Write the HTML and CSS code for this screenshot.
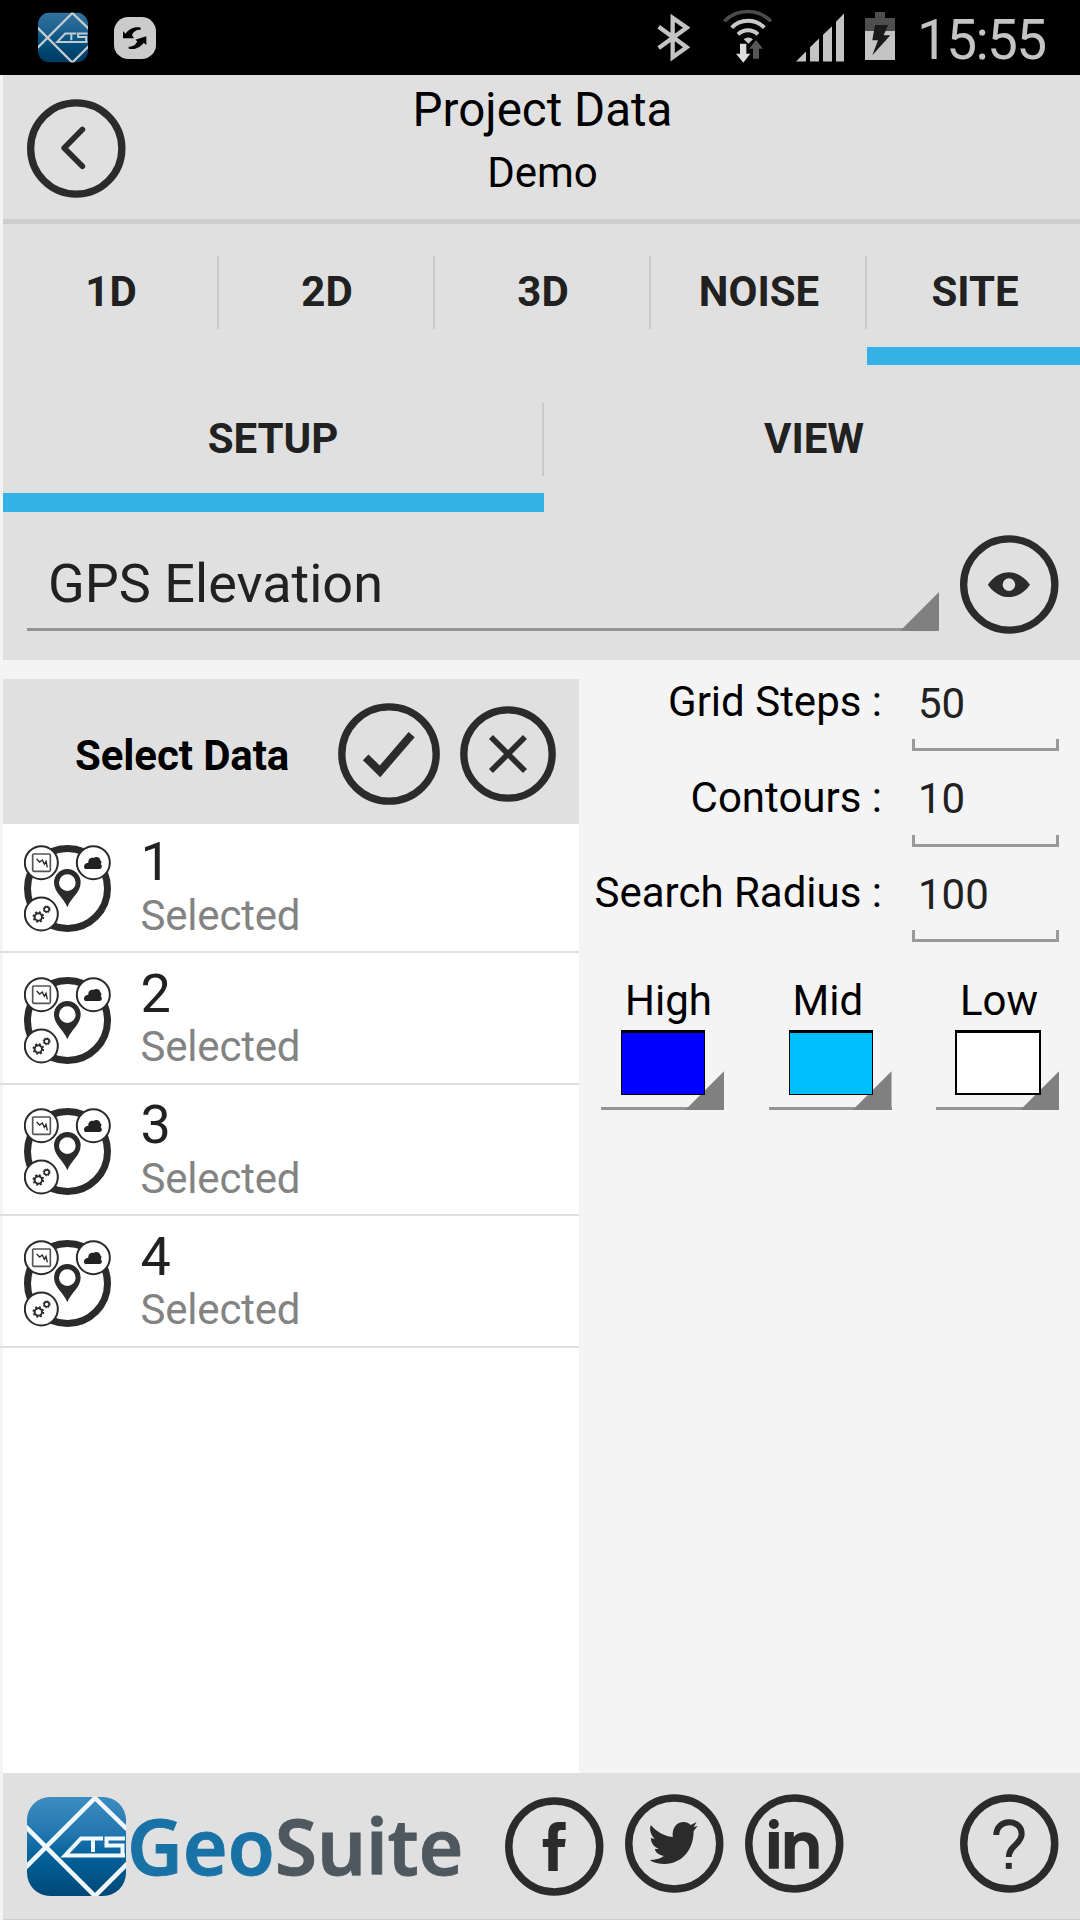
FILE: index.html
```html
<!DOCTYPE html>
<html lang="en">
<head>
<meta charset="utf-8">
<title>Project Data</title>
<link rel="stylesheet" href="styles.css">
</head>
<body>
<svg class="defs" width="0" height="0" aria-hidden="true">
  <defs>
    <linearGradient id="logo-fill" x1="0" y1="0" x2="0" y2="1">
      <stop offset="0" stop-color="#3c8cc0"/>
      <stop offset="0.35" stop-color="#2478b0"/>
      <stop offset="0.6" stop-color="#02629a"/>
      <stop offset="1" stop-color="#004878"/>
    </linearGradient>
    <clipPath id="logo-clip"><rect width="99" height="99" rx="23"/></clipPath>
    <symbol id="logo" viewBox="0 0 99 99">
      <g clip-path="url(#logo-clip)">
        <rect width="99" height="99" fill="url(#logo-fill)"/>
        <path d="M-3 72 68 1l34 33M-3 28l71 71 34-34" fill="none" stroke="#f1f9ff" stroke-width="4.5"/>
        <path d="M98 58.500H38L54 41.500H76M66 41.500V55M98 41.500H79.500V48.500H95.500V58" fill="none" stroke="#f1f9ff" stroke-width="4"/>
      </g>
    </symbol>
    <symbol id="site" viewBox="0 0 261 261">
      <g fill="none" stroke="#2b2b2b">
        <circle cx="130.500" cy="130.500" r="120" stroke-width="21"/>
        <g fill="#fff" stroke-width="6">
          <circle cx="52" cy="53" r="49.500"/><circle cx="208" cy="53" r="49.500"/><circle cx="52" cy="207" r="49.500"/>
        </g>
        <rect x="26" y="27" width="53" height="52" rx="3" stroke="#555" stroke-width="5"/>
        <path d="M38 42l9 9 8-6 6 13 5-9 4 18" stroke-width="4"/>
        <circle cx="43" cy="216" r="11" stroke-width="6"/>
        <circle cx="43" cy="216" r="15" stroke-width="5" stroke-dasharray="5.800 6"/>
        <circle cx="68" cy="193" r="7.500" stroke-width="5"/>
        <circle cx="68" cy="193" r="10.500" stroke-width="3" stroke-dasharray="4 4.250"/>
      </g>
      <path d="M184 72c-7-4-5-18 9-19-1-10 8-16 15-14 8-6 20-3 21 7 5 4 4 8 1 11 6 5 4 15-3 15z" fill="#222"/>
      <path fill-rule="evenodd" d="M130 187C119 158 90 143 90 112a40 40 0 0 1 80 0C170 143 141 158 130 187zM130 88a25 25 0 1 0 0 50 25 25 0 0 0 0-50z" fill="#2b2b2b"/>
    </symbol>
  </defs>
</svg>

<div class="status">
  <svg class="status-app" viewBox="0 0 99 99"><use href="#logo"/></svg>
  <svg class="status-sync" viewBox="0 0 126 126">
    <rect width="126" height="126" rx="43" fill="#cbcbcb"/>
    <path d="M27 43l8 7C44 36 62 28 80 32v6c-12-1-22 5-26 16l6 10H27zM97 84l-8-7C80 91 62 99 44 95v-6c12 1 22-5 26-16l-6-5 33-10z" fill="#000"/>
  </svg>
  <span class="grow"></span>
  <svg class="status-bt" viewBox="81 38 99 147">
    <path d="M86 79l84 62-42 30V53l42 29-84 61" fill="none" stroke="#c4c4c4" stroke-width="13"/>
  </svg>
  <svg class="status-wifi" viewBox="279 28 147 162">
    <path d="M283 65a98 98 0 0 1 140 0" fill="none" stroke="#4b4b4b" stroke-width="11"/>
    <g fill="none" stroke="#c9c9c9" stroke-width="12"><path d="M305 84a69 69 0 0 1 98 0M324 104a43 43 0 0 1 60 0"/></g>
    <path d="M341 119a20 20 0 0 1 28 0l-14 13z" fill="#c9c9c9"/>
    <path d="M330 132h19v30h12l-21 27-22-27h12z" fill="#ddd"/>
    <path d="M378 121l21 26h-12v30h-18v-30h-12z" fill="#565656"/>
  </svg>
  <svg class="status-signal" viewBox="498 38 144 146">
    <path d="M498 183l30-30v30zM540 183v-43l27-26v69zM579 183v-80l27-26v106zM618 183V64l24-25v144z" fill="#c4c4c4"/>
  </svg>
  <svg class="status-battery" viewBox="705 36 90 144">
    <path d="M735 36h30v18h30v39h-90V54h30z" fill="#4e4e4e"/>
    <path d="M705 93h90v87h-90z" fill="#c4c4c4"/>
    <path d="M735 75h39l-13 31h20l-54 60 17-45h-17z" fill="#1a1a1a"/>
  </svg>
  <span class="clock">15:55</span>
</div>

<div class="app">
  <header class="header">
    <svg class="round" viewBox="0 0 297 297"><circle cx="148.500" cy="148.500" r="137.500"/><path d="M167 91l-55 56 55 55" stroke-width="17" stroke-linecap="round" stroke-linejoin="round"/></svg>
    <div class="titles"><h1>Project Data</h1><p>Demo</p></div>
  </header>

  <nav class="tabs">
    <div class="tab"><span>1D</span></div>
    <div class="tab"><span>2D</span></div>
    <div class="tab"><span>3D</span></div>
    <div class="tab"><span>NOISE</span></div>
    <div class="tab active"><span>SITE</span></div>
  </nav>
  <nav class="tabs subtabs">
    <div class="tab active"><span>SETUP</span></div>
    <div class="tab"><span>VIEW</span></div>
  </nav>

  <div class="selector">
    <div class="spinner"><span>GPS Elevation</span></div>
    <svg class="round" viewBox="0 0 297 297"><circle cx="148.500" cy="148.500" r="137.500"/><path class="solid" fill-rule="evenodd" d="M84 149C119 99 176 99 211 149 176 199 119 199 84 149zM147.500 130a19 19 0 1 0 0 38 19 19 0 0 0 0-38z"/></svg>
  </div>

  <main class="main">
    <section class="panel">
      <div class="panel-head">
        <h2>Select Data</h2>
        <svg class="round check" viewBox="0 0 306 306"><circle cx="153" cy="153" r="141.500"/><path d="M83 163l43 42 95-110" stroke-width="24"/></svg>
        <svg class="round cross" viewBox="0 0 288 288"><circle cx="144" cy="144" r="132.500"/><path d="M93 93l102 102M195 93L93 195" stroke-width="17"/></svg>
      </div>
      <ul class="list">
        <li><svg class="site-icon"><use href="#site"/></svg><div><b>1</b><small>Selected</small></div></li>
        <li><svg class="site-icon"><use href="#site"/></svg><div><b>2</b><small>Selected</small></div></li>
        <li><svg class="site-icon"><use href="#site"/></svg><div><b>3</b><small>Selected</small></div></li>
        <li><svg class="site-icon"><use href="#site"/></svg><div><b>4</b><small>Selected</small></div></li>
      </ul>
    </section>
    <section class="options">
      <div class="field"><label>Grid Steps :</label><div class="input"><span>50</span><i></i></div></div>
      <div class="field"><label>Contours :</label><div class="input"><span>10</span><i></i></div></div>
      <div class="field"><label>Search Radius :</label><div class="input"><span>100</span><i></i></div></div>
      <div class="colors">
        <div class="color"><label>High</label><div class="pick"><i class="swatch high"></i></div></div>
        <div class="color"><label>Mid</label><div class="pick"><i class="swatch mid"></i></div></div>
        <div class="color"><label>Low</label><div class="pick"><i class="swatch low"></i></div></div>
      </div>
    </section>
  </main>

  <footer class="footer">
    <svg class="logo" viewBox="0 0 99 99"><use href="#logo"/></svg>
    <div class="brand"><span class="geo">Geo</span><span class="suite">Suite</span></div>
    <svg class="round fb" viewBox="0 0 99 99"><circle cx="49.500" cy="49.500" r="45.700"/><path class="solid" d="M43.500 74V50H38v-8h5.500v-5C43.500 29 47 25 54 25h7v8h-4.500C54 33 53 34.500 53 37v5h8l-1 8h-7v24z"/></svg>
    <svg class="round tw" viewBox="0 0 99 99"><circle cx="49.500" cy="49.500" r="45.700"/><path class="solid" d="M26 31c6 7 13 11 22 12-1-9 4-15 11-15 3 0 5 1 7 3l6-3-3 5 4-1-4 5c0 19-12 33-29 33-6 0-11-1-15-4 5 0 10-1 14-4-5-1-8-3-9-7h4c-5-2-8-6-8-11l4 1c-4-4-6-9-4-14z"/></svg>
    <svg class="round in" viewBox="0 0 99 99"><circle cx="49.500" cy="49.500" r="45.700"/><g class="solid"><circle cx="29" cy="30" r="5"/><path d="M24 38h10v37H24zM40 38h9v5c6-8 25-7 25 10v22h-9.500V55c0-11-14.500-11-14.500 0v20H40z"/></g></svg>
    <svg class="round help" viewBox="0 0 99 99"><circle cx="49.500" cy="49.500" r="45.700"/><path d="M36.500 41C36.500 24 62 24 62 40c0 10-13 12-13 23" stroke-width="6"/><path class="solid" d="M46 69h6v6h-6z"/></svg>
  </footer>
</div>
</body>
</html>
```
FILE: styles.css
```css
* { box-sizing: border-box; }
body {
  margin: 0;
  width: 1080px;
  height: 1920px;
  overflow: hidden;
  display: flex;
  flex-direction: column;
  background: #f4f4f4;
  color: #212121;
  font-family: Roboto, "Liberation Sans", sans-serif;
  font-size: 42px;
}
h1, h2, p, ul { margin: 0; padding: 0; }
svg { display: block; flex: none; }
.defs { position: absolute; }
.grow { flex: 1; }

/* Status bar */
.status {
  height: 75px;
  flex: none;
  background: #000;
  display: flex;
  align-items: flex-start;
  padding: 0 32px 0 38px;
}
.status-app { width: 50px; height: 51px; margin-top: 12px; opacity: .82; }
.status-sync { width: 42px; height: 42px; margin: 17px 0 0 26px; }
.status-bt { width: 33px; height: 49px; margin-top: 13px; }
.status-wifi { width: 49px; height: 54px; margin: 9px 0 0 33px; }
.status-signal { width: 48px; height: 49px; margin: 13px 0 0 24px; }
.status-battery { width: 30px; height: 48px; margin: 12px 0 0 21px; }
.clock { width: 153px; padding-left: 22px; line-height: 80px; font-size: 55px; letter-spacing: -1.700px; color: #c4c4c4; white-space: nowrap; }

.app { flex: 1; min-height: 0; display: flex; flex-direction: column; padding-left: 3px; }

/* Circular buttons */
.round { width: 98.500px; height: 99px; fill: none; stroke: #2b2b2b; }
.round > circle { stroke-width: 7.500; }
.header .round > circle, .selector .round > circle { stroke-width: 22; }
.round .solid { fill: #2b2b2b; stroke: none; }

.header {
  height: 149px;
  flex: none;
  display: grid;
  grid-template-columns: 99px 1fr 99px;
  padding: 0 22px 0 24px;
  background: #e0e0e0;
  border-bottom: 5px solid #cdcdcd;
}
.header .round { margin-top: 24px; }
.titles { text-align: center; color: #000; padding-top: 7px; }
.titles h1 { font-size: 47.500px; font-weight: 400; line-height: 56px; }
.titles p { line-height: 48px; margin-top: 11px; }

/* Tabs */
.tabs { display: flex; flex: none; height: 141px; background: #e0e0e0; overflow: hidden; }
.tab {
  flex: 0 0 216px;
  display: grid;
  grid-template-rows: 32px 73px 18px 18px;
  text-align: center;
  font-weight: 700;
}
.tab span { grid-row: 2; line-height: 71px; border-right: 2px solid #cacaca; padding-left: 2px; }
.tab.active::after { content: ""; grid-row: 4; background: #33b2e6; }
.subtabs { height: 147px; }
.subtabs .tab { flex-basis: 541px; grid-template-rows: 38px 73px 17px 19px; }
.subtabs .tab span { padding-left: 1px; }

.selector { height: 148px; flex: none; display: flex; gap: 21px; padding: 23px 0 0 24px; background: #e0e0e0; }
.spinner, .pick { border-bottom: 3px solid #949494; position: relative; }
.spinner { width: 912px; height: 92px; margin-top: 4px; padding-left: 21px; font-size: 54px; line-height: 89px; }
.spinner::after, .pick::after {
  content: "";
  position: absolute;
  right: 0;
  bottom: -3px;
  width: 39px;
  height: 39px;
  background: #808080;
  clip-path: polygon(100% 0, 100% 100%, 0 100%);
}

/* Data list */
.main { flex: 1; min-height: 0; display: flex; }
.panel { width: 576px; margin-top: 19px; background: #fff; }
.panel-head { height: 145px; display: flex; background: #e0e0e0; }
.panel-head h2 { width: 335px; padding-left: 72px; font-size: 42px; letter-spacing: -.1px; line-height: 153px; color: #000; white-space: nowrap; }
.check { width: 102px; height: 102px; margin-top: 24px; }
.cross { width: 96px; height: 96px; margin: 27px 0 0 20px; }
.panel-head .round > circle { stroke-width: 22; }
.list { list-style: none; margin-left: -3px; }
.list li { height: 131.600px; display: flex; align-items: flex-end; padding-left: 24px; border-bottom: 2px solid #e0e0e0; }
.list li:first-child { height: 129px; }
.site-icon { width: 87px; height: 87px; margin-bottom: 19px; }
.list div { margin: 0 0 10.500px 29.500px; }
.list b, .list small { display: block; }
.list b { font-size: 54px; font-weight: 400; line-height: 56px; }
.list small { font-size: 42px; line-height: 50px; letter-spacing: -.2px; color: #838383; margin-top: .5px; }

/* Options */
.options { flex: 1; color: #000; }
.field { height: 95.600px; display: flex; align-items: flex-end; justify-content: flex-end; padding-right: 21px; gap: 30px; }
.field:first-child { height: 91px; }
.field label { line-height: 60px; margin-bottom: 19px; white-space: nowrap; }
.input { width: 147px; color: #212121; }
.input span { display: block; line-height: 60px; padding-left: 6px; }
.input i { display: block; height: 12px; margin-top: 5.500px; border: solid #999; border-width: 0 3px 3px; }
.colors { display: flex; gap: 44.500px; padding: 34px 0 0 22px; }
.color { width: 123px; }
.color label { display: block; line-height: 50px; padding-left: 24px; }
.pick { height: 80px; margin-top: 4px; padding-left: 20px; }
.swatch { display: block; width: 84px; height: 65px; border: 1px solid #000; border-top-width: 3px; position: relative; z-index: 1; }
.high { background: #00f; }
.mid { background: #00bfff; }
.low { width: 86px; margin-left: -1px; background: #fff; border-width: 3px 2px 2px; }

/* Footer */
.footer { height: 147px; flex: none; display: flex; align-items: flex-start; background: #e0e0e0; padding-left: 24px; border-bottom: 1px solid #ccc; }
.logo { width: 99px; height: 99px; margin-top: 24px; }
.brand { width: 379px; padding-left: 1px; line-height: 145px; font-family: "Noto Sans", sans-serif; font-size: 77px; font-weight: 600; -webkit-text-stroke: .8px currentColor; letter-spacing: -.2px; white-space: nowrap; }
.geo { color: #1872a6; }
.suite { color: #4d585f; }
.fb { margin-top: 24px; }
.tw, .in, .help { margin-top: 21px; }
.tw { margin-left: 21.500px; }
.in { margin-left: 21.500px; }
.help { margin-left: 116.500px; }
```
